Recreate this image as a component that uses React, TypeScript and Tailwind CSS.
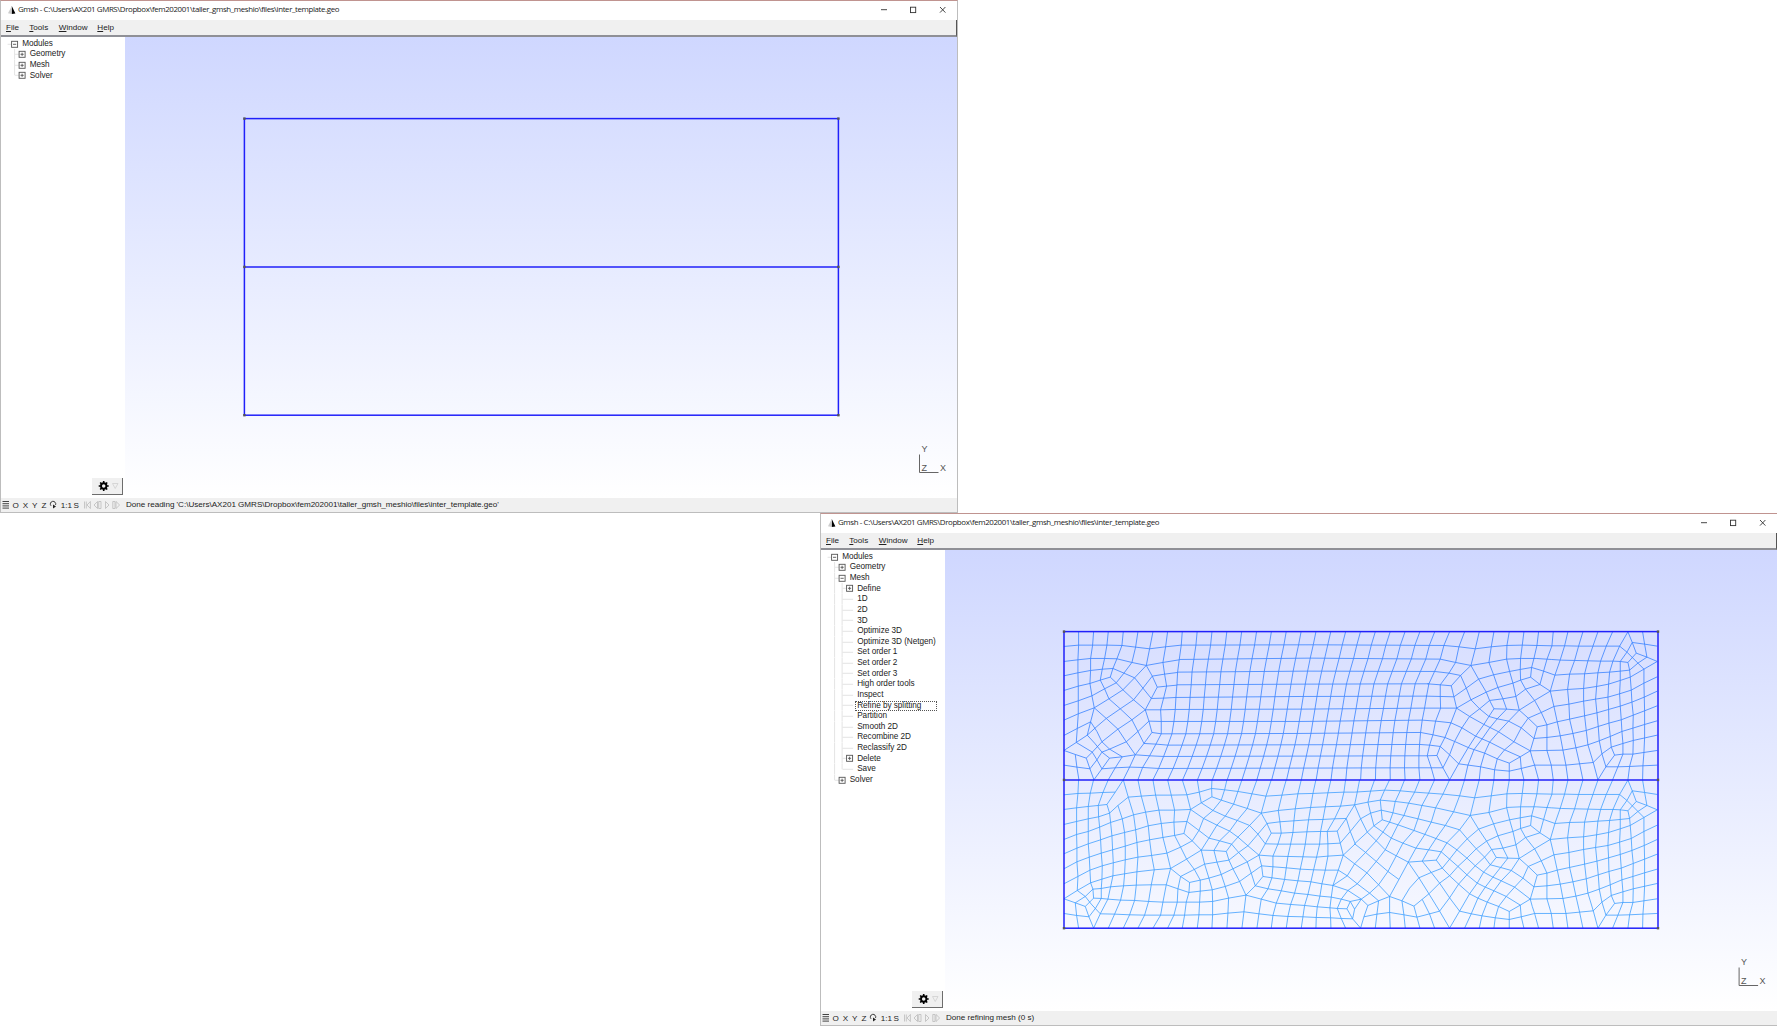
import React from "react";

const UI = "font-['Liberation_Sans',sans-serif]";

/* ---------- mesh data, in thirds of a pixel ---------- */

type Pt = [number, number];

// Structured block: column k starts at x = 383 + 44.55k on the top edge.
const ROWS_L = [36, 76, 119, 157, 195, 233, 269, 305, 342, 376, 410, 446, 480];
const ROWS_M = [36, 75, 115, 154, 193, 230, 268, 305, 341, 375, 409, 445, 480];
const ROWS_R = [36, 77, 118, 155, 192, 229, 265, 301, 338, 374, 408, 444, 480];
const OFF_L = [0, -3, -9, -14, -16, -19, -21, -25, -31, -43, -56, -71, -88];
const OFF_M = [0, -8, -17, -25, -32, -38, -44, -50, -56, -63, -71, -80, -88];
const OFF_R = [0, -17, -28, -45, -62, -69, -75, -82, -87, -90, -92, -92, -89];
const mix = (a: number, b: number, t: number) => a + (b - a) * t;
const three = (a: number[], b: number[], c: number[], j: number, t: number) =>
  t < 0.5 ? mix(a[j], b[j], t * 2) : mix(b[j], c[j], t * 2 - 1);
const COLS = 19;
const node = (i: number, j: number): Pt => {
  const t = i / (COLS - 1);
  return [383 + i * 44.55 + three(OFF_L, OFF_M, OFF_R, j, t), three(ROWS_L, ROWS_M, ROWS_R, j, t)];
};
const toPath = (pts: Pt[]) => "M" + pts.map((p) => p[0].toFixed(1) + "," + p[1].toFixed(1)).join("L");
const STRUCTURED = [
  ...Array.from({ length: COLS }, (_, i) => toPath(ROWS_L.map((_y, j) => node(i, j)))),
  ...ROWS_L.slice(1, -1).map((_y, j) => toPath(Array.from({ length: COLS }, (_, i) => node(i, j + 1)))),
].join("");

const UPPER_LEFT =
  "M28,80L72,76L114,76L157,76L202,77L243,82L285,87L333,81L380,76" +
  "M28,125L70,120L108,116L150,116L187,117L232,128L275,137L325,128L374,120" +
  "M28,168L70,159L108,152L145,148L175,146L208,160L240,174L265,205L290,236L327,235L364,233" +
  "M275,137L293,169L308,202L290,236L272,270L283,304L292,338L268,371L242,405" +
  "M293,169L330,163L369,158M308,202L336,199L367,196" +
  "M28,212L71,199L106,191L137,181L167,172L185,189L205,210L237,240L272,270" +
  "M187,117L175,146L167,172" +
  "M275,137L240,174L205,210L163,237L119,264L71,282L28,301" +
  "M28,257L71,243L112,228L150,207L185,189L208,160L232,128" +
  "M293,169L265,205L237,240L197,267L155,296L127,320L98,346L65,368L28,392" +
  "M119,264L155,296L190,328L215,366L242,405" +
  "M137,181L150,207L163,237L197,267L232,300L250,335L268,371" +
  "M272,270L232,300L190,328L142,366L113,397L95,415" +
  "M119,264L108,306L98,346L120,370L142,397L165,415" +
  "M28,347L68,326L108,306L127,335L142,366L165,388L203,411" +
  "M283,304L250,335L215,366L165,388L142,397L127,420L106,447" +
  "M242,405L203,411L165,415L142,447L118,480" +
  "M65,368L113,397L127,420L142,447" +
  "M28,392L62,404L95,415L106,447L118,480" +
  "M62,404L67,443L73,480M28,436L67,442L106,447" +
  "M142,447L182,444L225,442L264,443L312,446" +
  "M161,480L182,444L203,411M206,480L225,442L242,405L285,408L327,410" +
  "M72,36L72,76L70,120L70,159L71,199L71,243L71,282L68,326L65,368" +
  "M117,36L114,76L108,116L108,152L106,191L112,228L119,264" +
  "M161,36L157,76L150,116L143,148L137,181" +
  "M206,36L202,77L187,117M250,36L243,82L232,128M295,36L285,87L275,137" +
  "M339,36L333,81L325,128L330,163L336,199L327,235L318,270L320,305L320,342L304,373L285,408L264,443L250,480" +
  "M272,270L318,270L362,269M283,304L320,305L358,305M292,338L320,342L352,342M268,371L304,373L340,376";

// Everything near the right edge; the same pattern is used in both layers.
const RIGHT =
  "M457,77L503,76L547,77L592,78L630,78L672,79L715,79L755,79L795,79L817,97L850,130L868,148" +
  "M795,79L820,36L833,68L870,73L908,79M833,68L817,97L797,125" +
  "M833,68L845,100L877,112L908,125L868,148L827,172" +
  "M864,36L870,73L877,112L850,130L825,151M845,100L820,128" +
  "M456,118L500,116L545,116L590,119L620,121L660,122L700,123L738,124L775,124L797,125L820,128L825,151L827,172" +
  "M601,166L645,163L690,162L730,159L765,157L797,154L825,151" +
  "M827,172L797,182L762,193L726,200L687,206L639,209L587,214" +
  "M908,171L868,190L830,211L795,222L760,232L723,238L687,244L643,253L598,260L560,278L521,295" +
  "M908,214L869,232L832,247L797,259L762,269L727,279L690,288L645,298L608,306L577,315L548,321" +
  "M908,258L870,273L836,286L800,300L763,310L731,320L695,332L655,341L617,348L577,353L538,356" +
  "M908,303L870,314L835,325L802,335L767,350L734,363L700,375L664,384L625,391L577,392L527,393" +
  "M908,346L872,354L836,362L805,371L770,382L742,402L716,428L675,432L634,436L590,436L540,436L500,446L464,454" +
  "M908,392L868,398L835,403L805,403L780,406L770,382M780,406L754,441L730,480" +
  "M908,436L865,438L825,440L790,441L754,441" +
  "M868,148L868,190L869,232L870,273L870,314L870,354L868,398L865,438L864,480" +
  "M827,172L830,211L832,247L836,286L835,325L836,362L835,403L825,440L820,480" +
  "M797,125L797,154L797,182L795,222L797,259L800,300L802,335L805,371L805,403L790,441L774,480" +
  "M795,79L775,124L765,157L762,193L760,232L762,269L763,310L767,350L770,382" +
  "M774,36L755,79L738,124L730,159L726,200L723,238L727,279L731,320L734,363L742,402L754,441" +
  "M730,36L715,79L700,123L690,162L687,206L687,244L690,288L695,332L700,375L716,428L730,480" +
  "M685,36L672,79L660,122L645,163L639,209L643,253L645,298L655,341L664,384L675,432L685,480" +
  "M640,36L630,78L617,120L601,166L587,214L598,260L608,306L617,348L625,391L634,436L640,480" +
  "M596,36L592,78L577,119L567,154L556,194M552,36L547,77L538,116L531,143L528,172" +
  "M508,36L503,76L498,116L497,149L498,181L513,208L540,242L560,278L577,315L577,353L577,392L590,436L596,480" +
  "M464,36L457,77L456,118L465,155L475,190L484,230L494,271" +
  "M465,155L497,149L531,143L567,154L601,166M475,190L498,181L528,172L556,194L587,214L540,242L494,271" +
  "M556,194L513,208L484,230M494,271L521,295L548,321L538,356L527,393L497,411L464,430L464,480" +
  "M527,393L533,415L540,436L552,480M497,411L500,446L508,480";

const UPPER_MID =
  "M268,77L313,81L362,87L410,81L457,77M257,118L303,128L349,137L403,128L456,118" +
  "M240,155L283,160L318,167M218,192L257,195L290,198M214,229L257,230L298,231M210,265L258,265L306,265" +
  "M203,301L243,304L289,309M198,338L235,345L271,353M195,374L225,376L257,380M193,408L218,408L247,407M193,444L230,444L265,444" +
  "M330,36L313,81L303,128L283,160L257,195L257,230L258,265L243,304L235,345L225,376L218,408L230,444L240,480" +
  "M374,36L362,87L349,137L318,167L290,198L298,231L306,265L289,309L271,353L257,380L247,407L265,444L285,480" +
  "M418,36L410,81L403,128L417,165L430,203L445,237L456,268" +
  "M349,137L372,178L395,217L405,242L418,267L456,268L494,271" +
  "M372,178L417,165L465,155M395,217L430,203L475,190M405,242L445,237L484,230" +
  "M405,242L375,267L345,290L322,324L300,365L285,405L265,444" +
  "M318,167L335,205L349,240L375,267L403,290L418,267M395,217L349,240L306,265M372,178L335,205L298,231" +
  "M306,265L345,290L388,314L432,336L478,366L527,393" +
  "M403,290L428,297L462,304L500,324L538,356" +
  "M289,309L322,324L363,349L405,367L450,390L497,411" +
  "M271,353L300,365L345,385L390,400L428,417L464,430" +
  "M257,380L285,405L312,432L378,441L420,450L464,454" +
  "M403,290L388,314L363,349L340,385L312,432L285,480" +
  "M456,268L428,297L405,325L382,358L358,390L340,436L330,480" +
  "M494,271L462,304L432,336L405,367L390,400L378,441L374,480" +
  "M521,295L500,324L478,366L450,390L428,417L420,450L418,480";

const LOWER_LEFT =
  "M28,75L70,71L110,70L145,68L182,67M206,30L182,67L157,104L165,130" +
  "M28,119L66,114L101,110L131,107L157,104M161,30L145,68L131,107" +
  "M206,30L221,82L190,107L165,130L132,141L101,147L66,155L28,164" +
  "M28,209L66,194L101,185L135,172L168,158L203,147L237,135L273,127L313,121L360,121L408,119" +
  "M28,252L67,235L101,222L138,210L172,198L210,188L243,180L281,168L320,161L358,157L397,155" +
  "M28,297L67,276L104,262L140,250L174,240L212,229L247,218L285,210L325,203L360,197L388,191" +
  "M28,342L70,320L106,301L143,288L176,279L212,270L250,262L291,257L337,250L378,232L413,213" +
  "M28,387L68,362L108,339L142,328L175,318L210,312L247,306L299,300L348,296" +
  "M62,399L92,380L115,358L140,356L168,351L207,348L245,346L290,345L335,345L370,357L403,368" +
  "M28,387L62,399L92,410L103,441L117,475M62,399L66,437L72,475M28,431L66,437L103,441" +
  "M117,385L140,386L160,388L198,391L240,392L282,395L325,397L368,397L395,397L435,397L474,395L522,385L574,376" +
  "M68,362L92,380L110,403L137,432M117,385L92,410" +
  "M117,475L137,432L180,433L225,435L270,436L318,436L358,436L390,436L433,435L474,435L520,430L568,426L613,432L655,437L700,440L745,441L785,443L828,444L860,446L894,447" +
  "M140,386L123,415L103,441" +
  "M72,30L70,71L66,114L66,155L66,194L67,235L67,276L70,320L68,362" +
  "M117,30L107,70L101,110L101,147L101,185L101,222L104,262L106,301L108,339L115,358L117,385" +
  "M131,107L132,141L135,172L138,210L140,250L143,288L142,328L140,356L140,386" +
  "M165,130L168,158L172,198L174,240L176,279L175,318L168,351L160,388L137,432" +
  "M190,107L203,147L210,188L212,229L212,270L210,312L207,348L198,391L180,433L161,475" +
  "M221,82L237,135L243,180L247,218L250,262L247,306L245,346L240,392L225,435L206,475" +
  "M250,30L260,79L273,127L281,168L285,210L291,257L299,300L290,345L282,395L270,436L250,475" +
  "M295,30L303,76L313,121L320,161L325,203L337,250L348,296L335,345L325,397L318,436L295,475" +
  "M339,30L350,76L360,121L358,157L360,197L378,232L396,268L420,300L437,331L437,364L435,397L433,435L428,475" +
  "M221,82L260,79L303,76L350,76L397,75L434,67L471,56L510,60L550,65L592,72L634,79L682,76L730,72L775,71L820,69L868,67L900,67" +
  "M383,30L397,75L408,119L397,155L388,191L413,213L440,241L478,242L515,245L523,271" +
  "M428,30L434,67L440,99M408,119L440,99L472,81L500,91L537,103L578,116L620,130M472,30L471,56L472,81" +
  "M517,30L510,60L500,91L475,122L447,146L433,182L413,213" +
  "M562,30L550,65L537,103L512,139L487,166L463,205L440,241" +
  "M607,30L592,72L578,116L548,152L525,184L495,213L478,242" +
  "M440,99L475,122L512,139L548,152L585,167L610,193L632,222" +
  "M408,119L447,146L487,166L525,184L550,202L580,228L613,256" +
  "M397,155L433,182L463,205L495,213L531,223L552,248L578,276L590,310L602,348" +
  "M620,130L585,167L550,202L531,223L515,245" +
  "M637,161L610,193L580,228L552,248L523,271L487,277L450,283L413,302L378,320" +
  "M348,296L396,268L440,241L450,283L463,325L473,360L474,395L474,435L472,475" +
  "M478,242L487,277L500,314L512,350L522,385L520,430L517,475" +
  "M523,271L535,297L555,335L574,376L568,426L562,475" +
  "M613,256L578,276L535,297L500,314L463,325L437,331L405,338L378,320L348,296" +
  "M378,320L370,357L368,397L358,436L339,475M405,338L403,368L395,397L390,436L383,475" +
  "M403,368L437,364L473,360L512,350L555,335L590,310L621,288L625,320L602,348L574,376" +
  "M650,30L634,79L620,130L637,161L650,190L632,222L613,256L621,288" +
  "M620,130L671,122L722,117L768,113L812,111L858,109L900,105M637,161L676,156L718,153L762,150L805,149L840,147L875,146" +
  "M650,190L680,190L715,188L757,186L798,185L818,185L848,184M632,222L670,223L708,223L752,223L795,223L820,222L857,220" +
  "M613,256L655,259L700,260L745,261L786,262L820,259L866,256M621,288L655,291L695,294L737,298L777,300L812,301L851,301" +
  "M625,320L652,324L690,329L730,333L769,336L802,342L835,347L880,362L920,388" +
  "M602,348L640,357L680,363L720,370L760,374L796,379L830,382L860,388L887,395L900,418" +
  "M574,376L620,388L665,400L708,404L750,407L788,411L826,414L848,416L877,417" +
  "M695,30L682,76L671,122L676,156L680,190L670,223L655,259L655,291L652,324L640,357L620,388L613,432L607,475" +
  "M740,30L730,72L722,117L718,153L715,188L708,223L700,260L695,294L690,329L680,363L665,400L655,437L650,475" +
  "M695,475L700,440L708,404L720,370L730,333L737,298L745,261L752,223L757,186L762,150L768,113L775,71L784,30" +
  "M740,475L745,441L750,407L760,374L769,336L777,300L786,262L795,223L798,185L805,149L812,111L820,69L829,30" +
  "M784,475L785,443L788,411L796,379L802,342L812,301L820,259L820,222L818,185L840,147L858,109L868,67L873,30" +
  "M900,105L875,146L848,184L857,220L866,256L851,301L835,347L830,382L826,414L828,444L829,475" +
  "M873,475L860,446L848,416L860,388L880,362L908,342M877,417L894,447L918,475M877,417L887,395L920,388" +
  "M866,256L902,222M866,256L900,282L878,318L835,347M851,301L878,318L908,342M875,146L887,185L902,222M857,220L887,185L918,147";

const LOWER_MID =
  "M0,67L48,64L90,61L137,63L180,67L222,70L265,73L315,78L360,84L410,78L457,72" +
  "M0,105L40,97L77,91L122,95L162,100L202,107L243,114L297,126L347,137L403,128L456,114" +
  "M15,30L8,67L0,105L18,147L38,187M60,30L48,64L40,97L48,130L58,168" +
  "M105,30L90,61L77,91L80,121L83,150L58,168L38,187L0,222" +
  "M18,147L48,130L80,121L115,129L148,137L190,147L230,157L272,167L315,180" +
  "M83,150L130,165L178,182L228,200L277,219" +
  "M58,168L85,187L110,205L145,220L184,235L222,240L260,246L245,271L203,274L161,277" +
  "M38,187L65,213L92,240L125,258L161,277L133,329L105,380" +
  "M150,30L137,63L122,95L115,129L105,157L85,187L65,213L33,248L0,282" +
  "M195,30L180,67L162,100L148,137L130,165L110,205L92,240L65,275L37,309L8,342" +
  "M240,30L222,70L202,107L190,147L178,182L145,220L125,258L100,305L72,345L45,370L20,388L0,418L-6,447" +
  "M285,30L265,73L243,114L230,157L210,195L184,235L161,277" +
  "M330,30L315,78L297,126L272,167L245,205L222,240L203,274L230,308L255,340L285,384L315,424" +
  "M374,30L360,84L347,137L315,180L277,219L260,246" +
  "M418,30L410,78L403,128L417,162L430,198L445,235L460,265" +
  "M347,137L372,178L396,214L411,239L425,263L460,265L494,266" +
  "M372,178L417,162L465,150M396,214L430,198L475,185M411,239L445,235L484,225" +
  "M315,180L338,207L365,237L390,262L407,285L425,263" +
  "M396,214L365,237L337,265L310,290L285,318L255,340L223,372L178,409" +
  "M277,219L307,240L337,265L362,288L387,307L415,322L440,333L480,352L527,388" +
  "M260,246L285,268L310,290L337,315L368,340L392,352L418,363L455,380L497,406" +
  "M245,271L263,295L285,318L312,343L345,372L370,385L398,397L432,410L464,425" +
  "M372,178L338,207L307,240L285,268L263,295L230,308L193,324L165,355L142,393L148,435L152,475" +
  "M407,285L438,293L470,302L505,325L538,351" +
  "M411,239L390,262L362,288L337,315L312,343L285,384L255,424L222,433L187,442" +
  "M407,285L387,307L368,340L345,372L315,424L285,475L255,424L223,372L193,324L161,277" +
  "M315,424L350,432L382,438L422,444L464,449" +
  "M460,265L438,293L415,322L392,352L370,385L350,432L330,475" +
  "M494,266L470,302L440,333L418,363L398,397L382,438L374,475" +
  "M521,290L505,325L480,352L455,380L432,410L422,444L418,475" +
  "M187,442L148,435L105,428L67,433L28,441" +
  "M105,380L142,393L178,409L187,442L196,475M105,380L105,428L107,475M203,389L225,433L240,475" +
  "M105,380L72,393L40,407L28,441L18,475M72,393L67,433L62,475" +
  "M105,380L72,345L37,309L0,282M0,222L33,248L65,275L100,305L133,329M40,407L20,388M8,342L45,370L72,393";

function Mesh() {
  return (
    <g transform="translate(235 106.8) scale(0.33333)" fill="none" strokeWidth="3" strokeLinejoin="round">
      <g stroke="#3380ff" strokeOpacity="0.78">
        <path d={STRUCTURED} />
        <path d={UPPER_LEFT} />
        <path d={UPPER_MID} transform="translate(900 0)" />
        <path d={RIGHT} transform="translate(900 0)" />
      </g>
      <g stroke="#3399ff" strokeOpacity="0.75" transform="translate(0 450)">
        <path d={LOWER_LEFT} />
        <path d={LOWER_MID} transform="translate(900 0)" />
        <path d={RIGHT} transform="translate(900 -5)" />
      </g>
    </g>
  );
}

function Scene({ mesh }: { mesh: boolean }) {
  return (
    <svg className="block h-[461px] w-[832px]" viewBox={mesh ? "125.4 37 832 461" : "125 37 832 461"}>
      {mesh && <Mesh />}
      <g fill="none" stroke="#2020fa" strokeWidth="1.5">
        <rect x="244.4" y="118.6" width="594" height="296.6" />
        <path d="M244.4 266.9H838.4" />
      </g>
      <g fill="#555">
        {[118.6, 266.9, 415.2].map((y) => (
          <React.Fragment key={y}>
            <rect x="243.2" y={y - 1.2} width="2.4" height="2.4" />
            <rect x="837.2" y={y - 1.2} width="2.4" height="2.4" />
          </React.Fragment>
        ))}
      </g>
      <path d="M919.5 454.5V472.5H938.5" fill="none" stroke="#666" strokeWidth="1" />
      <g fill="#555" fontSize="9" fontFamily="Liberation Sans, sans-serif">
        <text x="921.4" y="452.3">Y</text>
        <text x="921.4" y="471">Z</text>
        <text x="940" y="471">X</text>
      </g>
    </svg>
  );
}

/* ---------- module tree ---------- */

type Row = { label: string; depth: number; box?: "+" | "-"; focus?: boolean };

const TREE_SHORT: Row[] = [
  { label: "Modules", depth: 0, box: "-" },
  { label: "Geometry", depth: 1, box: "+" },
  { label: "Mesh", depth: 1, box: "+" },
  { label: "Solver", depth: 1, box: "+" },
];

const TREE_FULL: Row[] = [
  { label: "Modules", depth: 0, box: "-" },
  { label: "Geometry", depth: 1, box: "+" },
  { label: "Mesh", depth: 1, box: "-" },
  { label: "Define", depth: 2, box: "+" },
  { label: "1D", depth: 2 },
  { label: "2D", depth: 2 },
  { label: "3D", depth: 2 },
  { label: "Optimize 3D", depth: 2 },
  { label: "Optimize 3D (Netgen)", depth: 2 },
  { label: "Set order 1", depth: 2 },
  { label: "Set order 2", depth: 2 },
  { label: "Set order 3", depth: 2 },
  { label: "High order tools", depth: 2 },
  { label: "Inspect", depth: 2 },
  { label: "Refine by splitting", depth: 2, focus: true },
  { label: "Partition", depth: 2 },
  { label: "Smooth 2D", depth: 2 },
  { label: "Recombine 2D", depth: 2 },
  { label: "Reclassify 2D", depth: 2 },
  { label: "Delete", depth: 2, box: "+" },
  { label: "Save", depth: 2 },
  { label: "Solver", depth: 1, box: "+" },
];

function TreeGlyph({ row, last }: { row: Row; last: boolean }) {
  const cx = 13.6 + row.depth * 7.5;
  return (
    <svg className="block h-[10.63px] w-9" viewBox="0 0 36 10.63">
      <g stroke="#dcdcdc" strokeWidth="0.8" fill="none">
        {row.depth >= 1 && <path d={last ? "M13.6 0V5.3" : "M13.6 0V10.63"} />}
        {row.depth >= 2 && <path d={row.label === "Save" ? "M21.1 0V5.3" : "M21.1 0V10.63"} />}
        <path d={row.box ? `M${cx - 7} 5.3H${cx}` : `M${cx - 7} 5.3H${cx + 3.5}`} />
      </g>
      {row.box && (
        <g stroke="#555" strokeWidth="0.9" fill="#fff">
          <rect x={cx - 3} y="2.3" width="6" height="6" />
          <path d={row.box === "+" ? `M${cx - 1.6} 5.3h3.2M${cx} 3.7v3.2` : `M${cx - 1.6} 5.3h3.2`} />
        </g>
      )}
    </svg>
  );
}

const TEXT_PAD = ["w-[21.2px]", "w-[28.7px]", "w-[36.2px]"];

function Tree({ rows }: { rows: Row[] }) {
  return (
    <div className="pt-[1.5px]">
      {rows.map((r, i) => (
        <div key={r.label} className="flex h-[10.63px] items-center">
          <div className={"shrink-0 " + TEXT_PAD[r.depth]}>
            <TreeGlyph row={r} last={i === rows.length - 1} />
          </div>
          <span
            className={
              "relative whitespace-pre text-[8.2px] leading-[10px] tracking-[-0.03px] " +
              (r.focus ? "-ml-[2px] h-[10px] w-[82px] pl-[2px] outline-1 -outline-offset-1 outline-dotted outline-[#555]" : "")
            }
          >
            {r.label}
          </span>
        </div>
      ))}
    </div>
  );
}

/* ---------- window ---------- */

function TitleBar() {
  return (
    <div className="flex h-[19px] items-start bg-white">
      <svg className="mt-[5px] ml-[7px] h-2 w-2" viewBox="0 0 8 8">
        <path d="M3.8 0L7.4 7.4L3.6 8Z" fill="#000" />
        <path d="M3.8 0L3.6 8L0 7.2Z" fill="#ccc" />
      </svg>
      <span className="ml-[2px] whitespace-pre font-['Open_Sans',sans-serif] text-[7.9px] leading-[17px] tracking-[-0.38px] text-[#222]">
        Gmsh - C:\Users\AX201 GMRS\Dropbox\fem202001\taller_gmsh_meshio\files\inter_template.geo
      </span>
      <svg className="mt-[4px] mr-[9.4px] ml-auto h-[10px] w-[68px]" viewBox="880 5 68 10" fill="none" stroke="#333" strokeWidth="0.9">
        <path d="M881 9.7H887M940 7L945.4 12.6M945.4 7L940 12.6" />
        <rect x="910.5" y="7.2" width="5.2" height="5.4" />
      </svg>
    </div>
  );
}

function MenuBar() {
  return (
    <div className="flex h-[17px] items-center border-r border-b-2 border-r-[#555] border-b-[#8f9096] bg-[#f0f0f0] pl-[5px] text-[8.1px] leading-[15px]">
      <span className="w-[23.3px]"><u>F</u>ile</span>
      <span className="w-[29.5px]"><u>T</u>ools</span>
      <span className="w-[38.5px]"><u>W</u>indow</span>
      <span><u>H</u>elp</span>
    </div>
  );
}

function StatusBar({ message }: { message: string }) {
  return (
    <div className="flex h-[14px] items-center bg-[#f0f0f0] text-[8.1px] leading-[14px]">
      <svg className="block h-[14px] w-[124px]" viewBox="1 498 124 14">
        <path d="M2.5 501.5H9M2.5 503.7H9M2.5 505.9H9M2.5 508.1H9" stroke="#444" strokeWidth="1" />
        <g fill="#222" fontSize="8.1" fontFamily="Liberation Sans, sans-serif">
          <text x="12.6" y="508">O</text>
          <text x="22.8" y="508">X</text>
          <text x="32" y="508">Y</text>
          <text x="41.6" y="508">Z</text>
          <text x="60.8" y="508">1:1</text>
          <text x="73.6" y="508">S</text>
        </g>
        <path d="M51 505.8A2.7 2.7 0 1 1 55.6 504.9" fill="none" stroke="#222" strokeWidth="0.9" />
        <path d="M53 504.6L56 506.6L53 508.6Z" fill="#222" />
        <g fill="none" stroke="#bbb" strokeWidth="0.8">
          <path d="M84.5 501.5V508.5M86.3 501.5V508.5M90.4 501.5V508.5L87 505ZM97.5 501.5V508.5L94 505ZM98.7 501.5H101V508.5H98.7ZM105.5 501.5V508.5L109 505ZM112.8 501.5H115V508.5H112.8ZM116 501.5V508.5L119.6 505Z" />
        </g>
      </svg>
      <span className="ml-[1px] whitespace-pre tracking-[-0.02px] text-[#222]">{message}</span>
    </div>
  );
}

function GearButton() {
  return (
    <div className="mt-auto mr-[2.5px] mb-[3.5px] ml-auto flex h-[17px] w-[31px] items-center border-r border-b border-[#6d6d6d] bg-[#f0f0f0]">
      <svg className="h-4 w-[30px]" viewBox="0 0 30 16">
        <circle cx="11.7" cy="8" r="2.7" fill="none" stroke="#000" strokeWidth="1.9" />
        <path
          d="M11.7 3V5M11.7 11V13M6.7 8H8.7M14.7 8H16.7M8.2 4.5L9.6 5.9M13.8 10.1L15.2 11.5M15.2 4.5L13.8 5.9M9.6 10.1L8.2 11.5"
          stroke="#000"
          strokeWidth="1.6"
        />
        <path d="M20.5 5.5H26L23.2 10.5Z" fill="none" stroke="#d2d2d2" strokeWidth="0.9" />
      </svg>
    </div>
  );
}

function GmshWindow({ rows, mesh, message }: { rows: Row[]; mesh: boolean; message: string }) {
  return (
    <section
      className={
        "flex h-[513px] w-[958px] shrink-0 flex-col border border-[#bdbdbd] border-t-[#c09490] bg-white text-[#222] " + UI
      }
    >
      <TitleBar />
      <MenuBar />
      <div className="flex h-[461px]">
        <aside className="flex w-[124px] shrink-0 flex-col">
          <Tree rows={rows} />
          <GearButton />
        </aside>
        <main className="min-w-0 flex-1 overflow-hidden bg-linear-to-b from-[#cfd7ff] to-white">
          <Scene mesh={mesh} />
        </main>
      </div>
      <StatusBar message={message} />
    </section>
  );
}

export default function App() {
  return (
    <div className="flex h-[1026px] w-[1777px] flex-col overflow-hidden bg-white">
      <GmshWindow
        rows={TREE_SHORT}
        mesh={false}
        message="Done reading 'C:\Users\AX201 GMRS\Dropbox\fem202001\taller_gmsh_meshio\files\inter_template.geo'"
      />
      <div className="flex pl-[820px]">
        <GmshWindow rows={TREE_FULL} mesh message="Done refining mesh (0 s)" />
      </div>
    </div>
  );
}
